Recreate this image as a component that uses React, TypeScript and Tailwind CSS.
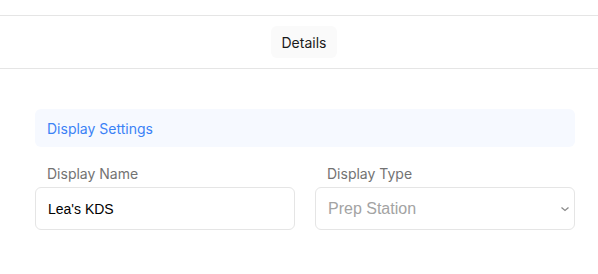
export default function App() {
  return (
    <div className="min-h-screen bg-white font-['Inter',sans-serif]">
      <div className="h-[15px]" />
      <div className="border-y border-[#e5e5e5] h-[54px] flex items-center justify-center pl-[10px]">
        <button
          type="button"
          className="h-[32px] px-[11px] rounded-md bg-[#fafafa] text-[14px] text-[#1a1a1a]"
        >
          Details
        </button>
      </div>

      <div className="pl-[35px] pr-[23px] pt-[40px]">
        <div className="h-[38px] flex items-center px-[12px] rounded-md bg-[#f6f9ff] text-[14px] text-[#3b82f6]">
          Display Settings
        </div>

        <div className="grid grid-cols-2 gap-x-[20px] mt-[17px]">
          <div>
            <label className="block px-[12px] text-[14px] text-[#737373] leading-[20px] mb-[3px]">Display Name</label>
            <input
              defaultValue="Lea's KDS"
              className="w-full h-[43px] px-[12px] rounded-md border border-[#e5e5e5] font-['Liberation_Sans',Arial,sans-serif] text-[14px] text-black outline-none"
            />
          </div>
          <div>
            <label className="block px-[12px] text-[14px] text-[#737373] leading-[20px] mb-[3px]">Display Type</label>
            <div className="relative">
              <select
                defaultValue="prep"
                className="w-full h-[43px] pl-[12px] pr-[12px] rounded-md border border-[#e5e5e5] font-['Liberation_Sans',Arial,sans-serif] text-[16px] text-[#a3a3a3] bg-white appearance-none outline-none"
              >
                <option value="prep">Prep Station</option>
                <option value="expo">Expo Station</option>
              </select>
              <svg
                className="absolute right-[5px] top-1/2 -translate-y-1/2 pointer-events-none"
                width="10"
                height="6"
                viewBox="0 0 10 6"
                fill="none"
              >
                <path d="M1.5 1.5 L5 4.5 L8.5 1.5" stroke="#8a8a8a" strokeWidth="1.3" />
              </svg>
            </div>
          </div>
        </div>
      </div>
    </div>
  );
}
